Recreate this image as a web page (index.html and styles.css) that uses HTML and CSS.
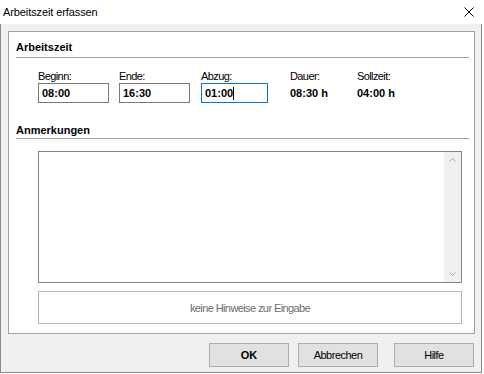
FILE: index.html
```html
<!DOCTYPE html>
<html lang="de">
<head>
<meta charset="utf-8">
<title>Arbeitszeit erfassen</title>
<link rel="stylesheet" href="styles.css">
</head>
<body>
<div class="window">
  <div class="titlebar">
    <span class="title">Arbeitszeit erfassen</span>
    <svg class="close" width="10" height="10" viewBox="0 0 10 10"><path d="M0.5 0.5L9.5 9.5M9.5 0.5L0.5 9.5" stroke="#000" stroke-width="1" fill="none"/></svg>
  </div>
  <div class="client">
    <div class="panel">
      <div class="section-title first">Arbeitszeit</div>
      <div class="fields">
        <div class="field f-begin"><div class="label">Beginn:</div><div class="input w71">08:00</div></div>
        <div class="field f-end"><div class="label">Ende:</div><div class="input w71">16:30</div></div>
        <div class="field f-abzug"><div class="label">Abzug:</div><div class="input w67 focus">01:00<span class="caret"></span></div></div>
        <div class="field f-dauer"><div class="label">Dauer:</div><div class="value">08:30 h</div></div>
        <div class="field"><div class="label">Sollzeit:</div><div class="value">04:00 h</div></div>
      </div>
      <div class="section-title second">Anmerkungen</div>
      <div class="memo">
        <div class="memo-text"></div>
        <div class="scrollbar">
          <svg width="17" height="10" viewBox="0 0 17 10"><path d="M5.5 6.5L8.5 3.5L11.5 6.5" stroke="#a6a6a6" stroke-width="1" fill="none"/></svg>
          <svg width="17" height="10" viewBox="0 0 17 10"><path d="M5.5 3.5L8.5 6.5L11.5 3.5" stroke="#a6a6a6" stroke-width="1" fill="none"/></svg>
        </div>
      </div>
      <div class="hint">keine Hinweise zur Eingabe</div>
    </div>
    <div class="buttons">
      <div class="btn ok">OK</div>
      <div class="btn cancel">Abbrechen</div>
      <div class="btn help">Hilfe</div>
    </div>
  </div>
</div>
</body>
</html>
```

FILE: styles.css
```css
html, body {
  margin: 0;
  padding: 0;
  background: #ffffff;
}

body {
  font-family: "Liberation Sans", Arial, sans-serif;
  font-size: 11px;
  color: #000;
}

.window {
  width: 482px;
  height: 373px;
  display: flex;
  flex-direction: column;
}

.titlebar {
  height: 24px;
  flex: none;
  background: #fff;
  display: flex;
  align-items: center;
  justify-content: space-between;
  padding: 0 8px 0 3px;
  box-sizing: border-box;
}

.title {
  font-size: 11px;
  color: #000;
  letter-spacing: -0.1px;
}

.close {
  display: block;
}

.client {
  flex: 1;
  background: #f0f0f0;
  border: 1px solid #8a8a8a;
  border-top: none;
  padding: 7px 6px 0 7px;
  box-sizing: border-box;
}

.panel {
  height: 303px;
  box-sizing: border-box;
  border: 1px solid #a0a0a0;
  background: #fff;
  display: flex;
  flex-direction: column;
}

.section-title {
  margin: 0 5px 0 7px;
  font-weight: bold;
  line-height: 13px;
  border-bottom: 1px solid #a0a0a0;
}

.section-title.first {
  padding-top: 9px;
  padding-bottom: 3px;
}

.section-title.second {
  margin-top: 21px;
  padding-bottom: 1px;
}

.fields {
  display: flex;
  margin: 12px 0 0 29px;
}

.field {
  display: flex;
  flex-direction: column;
}

.f-begin { width: 81px; }
.f-end { width: 82px; }
.f-abzug { width: 89px; }
.f-dauer { width: 67px; }

.label {
  line-height: 13px;
  height: 13px;
  letter-spacing: -0.6px;
  color: #000;
}

.input {
  height: 20px;
  box-sizing: border-box;
  border: 1px solid #7a7a7a;
  padding-left: 3px;
  line-height: 18px;
  font-weight: bold;
  display: flex;
  align-items: center;
}

.w71 { width: 71px; }
.w67 { width: 67px; }

.input.focus {
  border-color: #0078d7;
}

.caret {
  display: inline-block;
  width: 1px;
  height: 13px;
  background: #000;
  margin-left: 0;
}

.value {
  height: 20px;
  line-height: 20px;
  font-weight: bold;
}

.memo {
  margin: 12px 0 0 29px;
  width: 424px;
  height: 132px;
  box-sizing: border-box;
  border: 1px solid #828282;
  display: flex;
}

.memo-text {
  flex: 1;
}

.scrollbar {
  width: 17px;
  background: #f0f0f0;
  display: flex;
  flex-direction: column;
  justify-content: space-between;
  padding: 3px 0;
}

.scrollbar svg {
  display: block;
}

.hint {
  margin: 8px 0 0 29px;
  width: 424px;
  height: 33px;
  box-sizing: border-box;
  border: 1px solid #b4b4b4;
  display: flex;
  align-items: center;
  justify-content: center;
  color: #6d6d6d;
  letter-spacing: -0.6px;
}

.buttons {
  display: flex;
  justify-content: flex-end;
  margin: 9px 1px 0 0;
}

.btn {
  width: 80px;
  height: 24px;
  box-sizing: border-box;
  background: #e1e1e1;
  border: 1px solid #adadad;
  display: flex;
  align-items: center;
  justify-content: center;
  letter-spacing: -0.5px;
}

.btn.ok {
  font-weight: bold;
  letter-spacing: 0;
}

.btn.cancel {
  margin-left: 9px;
}

.btn.help {
  margin-left: 16px;
}
```
